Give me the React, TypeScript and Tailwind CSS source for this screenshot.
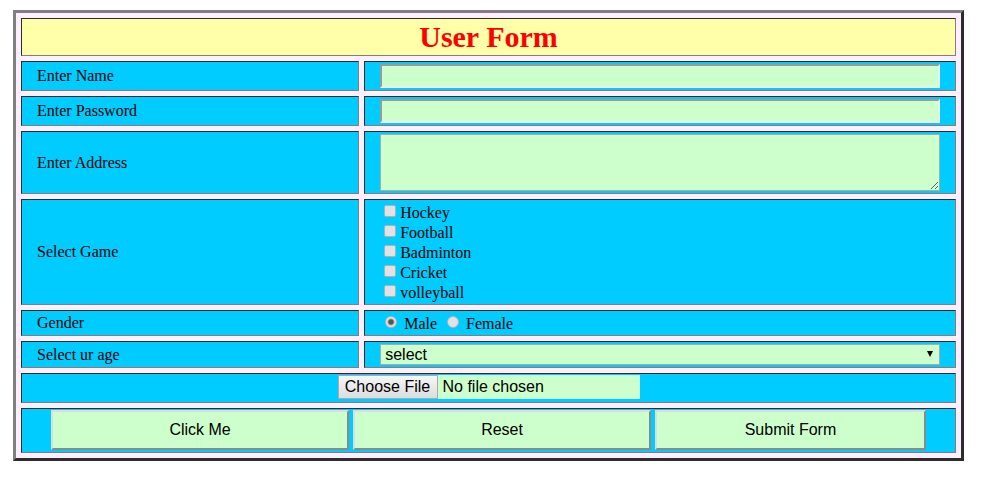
import type { ReactNode } from "react";

const CELL =
  "border border-t-[#2c2c2c] border-l-[#2c2c2c] border-b-[#808080] border-r-[#808080] bg-[#00ccff] px-[15px]";
const TEXT_BOX =
  "block h-6 w-full border-2 border-t-[#9a9a9a] border-l-[#9a9a9a] border-b-[#eeeeee] border-r-[#eeeeee] bg-[#ccffcc] px-1 font-['Liberation_Sans',Arial,sans-serif] text-base outline-none";
const BUTTON =
  "h-10 border-2 border-t-[#dddddd] border-l-[#dddddd] border-b-[#8a8a8a] border-r-[#8a8a8a] bg-[#ccffcc] font-['Liberation_Sans',Arial,sans-serif] text-base";

const GAMES = ["Hockey", "Football", "Badminton", "Cricket", "volleyball"];
const GENDERS = ["Male", "Female"];

type RowProps = {
  label: string;
  htmlFor?: string;
  labelId?: string;
  children: ReactNode;
};

function Row({ label, htmlFor, labelId, children }: RowProps) {
  return (
    <div className="grid grid-cols-[4fr_7fr] gap-[5px]">
      <div className={`${CELL} flex items-center leading-5`}>
        {htmlFor ? (
          <label htmlFor={htmlFor}>{label}</label>
        ) : (
          <span id={labelId}>{label}</span>
        )}
      </div>
      <div className={`${CELL} ${htmlFor ? "py-0.5" : "pt-[3px] pb-px"}`}>{children}</div>
    </div>
  );
}

export default function App() {
  return (
    <form
      onSubmit={(e) => e.preventDefault()}
      className="mt-2.5 mr-[35px] ml-[13px] flex flex-col gap-[5px] border-[3px] border-t-[#808080] border-r-[#2c2c2c] border-b-[#2c2c2c] border-l-[#808080] bg-[#ffeeff] p-[5px] font-['Liberation_Serif','Times_New_Roman',serif] text-base text-black"
    >
      <h1 className="border border-t-[#2c2c2c] border-r-[#808080] border-b-[#808080] border-l-[#2c2c2c] bg-[#ffffaa] text-center text-[30px] leading-9 font-bold text-[#ff0000]">
        User Form
      </h1>

      <Row label="Enter Name" htmlFor="name">
        <input id="name" type="text" className={TEXT_BOX} />
      </Row>
      <Row label="Enter Password" htmlFor="password">
        <input id="password" type="password" className={TEXT_BOX} />
      </Row>
      <Row label="Enter Address" htmlFor="address">
        <textarea
          id="address"
          className="block h-[57px] w-full resize border border-[#a9a9a9] bg-[#ccffcc] p-0.5 font-['Liberation_Sans',Arial,sans-serif] text-base outline-none"
        />
      </Row>
      <Row label="Select Game" labelId="game-label">
        <div role="group" aria-labelledby="game-label" className="flex flex-col items-start pl-1 leading-5">
          {GAMES.map((game) => (
            <label key={game} className="flex items-start gap-1">
              <input
                type="checkbox"
                name="game"
                value={game}
                className="mt-0.5 size-3 appearance-none rounded-[2px] border border-[#b0b0b0] bg-[#e2e2e2] checked:bg-[#555555]"
              />
              {game}
            </label>
          ))}
        </div>
      </Row>
      <Row label="Gender" labelId="gender-label">
        <div role="radiogroup" aria-labelledby="gender-label" className="flex gap-2.5 pl-[5px] leading-5">
          {GENDERS.map((gender) => (
            <label key={gender} className="flex items-start gap-[7px]">
              <input
                type="radio"
                name="gender"
                value={gender}
                defaultChecked={gender === "Male"}
                className="mt-0.5 size-3 appearance-none rounded-full border border-[#b0b0b0] bg-[#e2e2e2] checked:bg-[radial-gradient(circle,#555555_2px,#e6e6e6_4px)]"
              />
              {gender}
            </label>
          ))}
        </div>
      </Row>
      <Row label="Select ur age" htmlFor="age">
        <div className="relative">
          <select
            id="age"
            className="block h-[21px] w-full appearance-none border border-[#a9a9a9] bg-[#ccffcc] px-1 font-['Liberation_Sans',Arial,sans-serif] text-base leading-[19px] outline-none"
          >
            <option>select</option>
          </select>
          <svg viewBox="0 0 6 6" className="pointer-events-none absolute top-[7px] right-[7px] size-1.5" aria-hidden="true">
            <path d="M0 0h6L3 6z" />
          </svg>
        </div>
      </Row>

      <div className={`${CELL} flex justify-center pt-px pb-[3px]`}>
        <input
          type="file"
          aria-label="Choose File"
          className="block h-6 w-[302px] bg-[#ccffcc] font-['Liberation_Sans',Arial,sans-serif] text-base leading-6 file:mr-[5px] file:h-6 file:w-[100px] file:border file:border-solid file:border-[#b0a8a8] file:bg-linear-to-b file:from-[#f6f6f6] file:to-[#dddddd] file:p-0 file:text-base file:leading-[22px] file:text-black"
        />
      </div>

      <div className={`${CELL} flex justify-center gap-1 pt-px pb-0.5`}>
        <button type="button" className={`${BUTTON} w-[33%]`}>
          Click Me
        </button>
        <button type="reset" className={`${BUTTON} w-[33%]`}>
          Reset
        </button>
        <button type="submit" className={`${BUTTON} w-[30%]`}>
          Submit Form
        </button>
      </div>
    </form>
  );
}
